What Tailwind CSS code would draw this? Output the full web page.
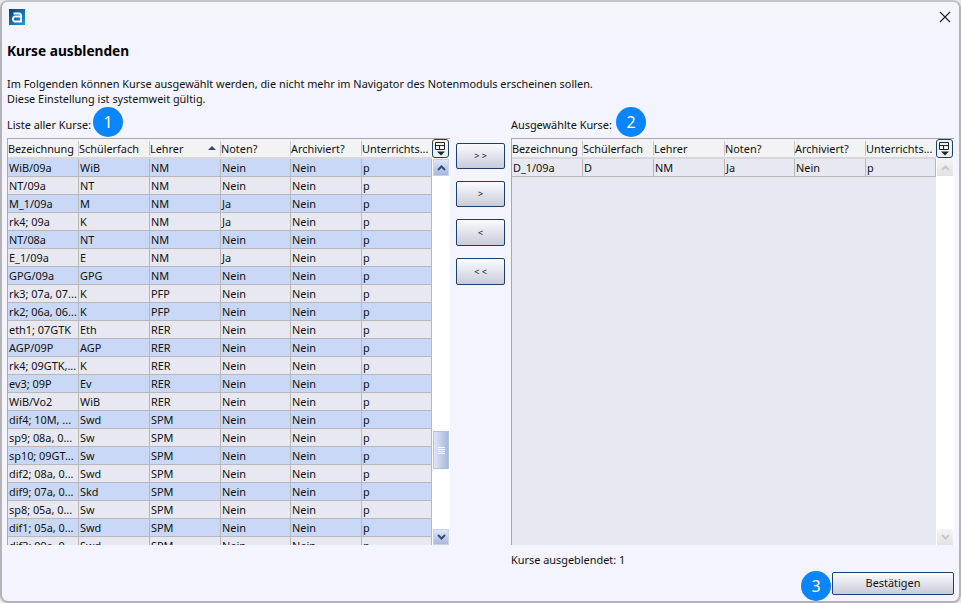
<!DOCTYPE html>
<html lang="de">
<head>
<meta charset="UTF-8">
<title>Kurse ausblenden</title>
<script src="https://cdn.jsdelivr.net/npm/@tailwindcss/browser@4"></script>
</head>
<body class="w-[961px] h-[603px] overflow-hidden bg-[#e8e8e8] font-['Noto_Sans',sans-serif] text-[10.9px] text-[#111]">
<div class="relative w-[961px] h-[603px] flex flex-col rounded-[8px] border-2 border-b-2 border-[#b4b4b8] border-t-[#c4c4c8] bg-[#f3f4ff] overflow-hidden">

  <!-- title bar -->
  <div class="h-[29px] shrink-0 flex items-center justify-between pl-[7px] pr-[8px] bg-[#f4f5fb]">
    <svg width="16" height="16" viewBox="0 0 16 16">
      <defs><linearGradient id="lg" x1="0" y1="0" x2="1" y2="1"><stop offset="0" stop-color="#0b3f78"/><stop offset="1" stop-color="#1f9be0"/></linearGradient></defs>
      <rect width="16" height="16" fill="url(#lg)"/>
      <path d="M4.500 4.500h5.500a2 2 0 0 1 2 2v6H6a2 2 0 0 1-2-2V9.500a2 2 0 0 1 2-2h6" fill="none" stroke="#fff" stroke-width="1.800"/>
    </svg>
    <svg width="12" height="12" viewBox="0 0 12 12"><path d="M1 1l10 10M11 1L1 11" stroke="#222" stroke-width="1.100"/></svg>
  </div>

  <div class="flex-1 flex flex-col px-[5px]">
    <h1 class="mt-[10px] text-[13.7px] leading-[19px] font-bold text-black">Kurse ausblenden</h1>
    <p class="mt-[16px] leading-[15px]">Im Folgenden können Kurse ausgewählt werden, die nicht mehr im Navigator des Notenmoduls erscheinen sollen.<br>Diese Einstellung ist systemweit gültig.</p>

    <div class="mt-[11px] flex items-start">
      <!-- left list -->
      <div class="w-[443px] shrink-0">
        <div class="h-[15px] leading-[15px]">Liste aller Kurse:</div>
        <div class="mt-[6px] h-[407px] border-t border-l border-[#a9a9ad] flex overflow-hidden">
          <div class="w-[424px] shrink-0 flex flex-col">
            <div class="h-[20px] shrink-0 grid grid-cols-[71px_71px_71px_70px_71px_70px] items-center bg-[#f3f3f6] border-b-2 border-[#d8d8dc]">
              <div class="h-[15px] leading-[15px] border-r border-[#c8c8cc] whitespace-nowrap overflow-hidden">Bezeichnung</div>
              <div class="h-[15px] leading-[15px] border-r border-[#c8c8cc] whitespace-nowrap overflow-hidden">Schülerfach</div>
              <div class="h-[15px] leading-[15px] pr-[4px] border-r border-[#c8c8cc] flex items-center justify-between">Lehrer<span class="w-0 h-0 border-x-[4px] border-x-transparent border-b-[4px] border-b-[#334a5e]"></span></div>
              <div class="h-[15px] leading-[15px] border-r border-[#c8c8cc]">Noten?</div>
              <div class="h-[15px] leading-[15px] border-r border-[#c8c8cc]">Archiviert?</div>
              <div class="h-[15px] leading-[15px] whitespace-nowrap overflow-hidden">Unterrichts...</div>
            </div>
            <div id="rows" class="flex-1 overflow-hidden"></div>
          </div>
          <div class="w-[18px] shrink-0 relative flex flex-col bg-white pr-[1px]">
            <div class="h-[19px] w-[17px] shrink-0 flex items-center justify-center rounded-[3px] border border-[#1f3f6e] bg-[#f0f2fa]">
              <svg width="11" height="14" viewBox="0 0 11 14"><path d="M.5.500h9v7h-9zM.5 3.500h9M4.500 3.500v4" fill="none" stroke="#222"/><path d="M2 9.500h8l-4 4z" fill="#222"/></svg>
            </div>
            <div class="mt-[1px] h-[17px] ml-[1px] flex items-center justify-center border border-[#c8d2ee] bg-gradient-to-b from-[#dfe6f8] to-[#a9b7dc]">
              <svg width="9" height="6" viewBox="0 0 9 6"><path d="M1 5l3.500-3.500L8 5" fill="none" stroke="#35506e" stroke-width="2"/></svg>
            </div>
            <div class="relative flex-1">
              <div class="absolute top-[255px] left-[1px] w-[16px] h-[38px] border border-[#b4c0e4] bg-gradient-to-r from-[#dfe6f8] to-[#a9b7dc] flex flex-col items-center justify-center gap-[1px]">
                <span class="block w-[7px] h-px bg-white"></span><span class="block w-[7px] h-px bg-white"></span><span class="block w-[7px] h-px bg-white"></span><span class="block w-[7px] h-px bg-white"></span>
              </div>
            </div>
            <div class="h-[16px] ml-[1px] flex items-center justify-center border border-[#c8d2ee] bg-gradient-to-b from-[#dfe6f8] to-[#a9b7dc]">
              <svg width="9" height="6" viewBox="0 0 9 6"><path d="M1 1l3.500 3.500L8 1" fill="none" stroke="#35506e" stroke-width="2"/></svg>
            </div>
          </div>
        </div>
      </div>

      <!-- move buttons -->
      <div class="w-[61px] shrink-0 pt-[26px] pl-[6px] flex flex-col">
        <button class="w-[49px] h-[26px] rounded-[2px] border border-[#1f3f6e] bg-gradient-to-b from-[#fbfbff] to-[#c9cbda] text-[9px]">&gt; &gt;</button>
        <button class="mt-[12px] w-[49px] h-[26px] rounded-[2px] border border-[#1f3f6e] bg-gradient-to-b from-[#fbfbff] to-[#c9cbda] text-[9px]">&gt;</button>
        <button class="mt-[12px] w-[49px] h-[27px] rounded-[2px] border border-[#1f3f6e] bg-gradient-to-b from-[#fbfbff] to-[#c9cbda] text-[9px]">&lt;</button>
        <button class="mt-[12px] w-[49px] h-[27px] rounded-[2px] border border-[#1f3f6e] bg-gradient-to-b from-[#fbfbff] to-[#c9cbda] text-[9px]">&lt; &lt;</button>
      </div>

      <!-- right list -->
      <div class="w-[443px] shrink-0">
        <div class="h-[15px] leading-[15px]">Ausgewählte Kurse:</div>
        <div class="mt-[6px] h-[407px] border-t border-l border-[#a9a9ad] flex overflow-hidden">
          <div class="w-[424px] shrink-0 flex flex-col bg-[#e8e8f2]">
            <div class="h-[20px] shrink-0 grid grid-cols-[71px_71px_71px_70px_71px_70px] items-center bg-[#f3f3f6] border-b-2 border-[#d8d8dc]">
              <div class="h-[15px] leading-[15px] border-r border-[#c8c8cc] whitespace-nowrap overflow-hidden">Bezeichnung</div>
              <div class="h-[15px] leading-[15px] border-r border-[#c8c8cc] whitespace-nowrap overflow-hidden">Schülerfach</div>
              <div class="h-[15px] leading-[15px] border-r border-[#c8c8cc]">Lehrer</div>
              <div class="h-[15px] leading-[15px] border-r border-[#c8c8cc]">Noten?</div>
              <div class="h-[15px] leading-[15px] border-r border-[#c8c8cc]">Archiviert?</div>
              <div class="h-[15px] leading-[15px] whitespace-nowrap overflow-hidden">Unterrichts...</div>
            </div>
            <div class="h-[18px] grid grid-cols-[71px_71px_71px_70px_71px_70px] border-b border-[#b8b8bc] leading-[17px]">
              <div class="pl-[1px] border-r border-[#b8b8bc]">D_1/09a</div><div class="pl-[1px] border-r border-[#b8b8bc]">D</div><div class="pl-[1px] border-r border-[#b8b8bc]">NM</div><div class="pl-[1px] border-r border-[#b8b8bc]">Ja</div><div class="pl-[1px] border-r border-[#b8b8bc]">Nein</div><div class="pl-[1px] border-r border-[#b8b8bc]">p</div>
            </div>
          </div>
          <div class="w-[18px] shrink-0 flex flex-col bg-white pr-[1px]">
            <div class="h-[19px] w-[17px] shrink-0 flex items-center justify-center rounded-[3px] border border-[#1f3f6e] bg-[#f0f2fa]">
              <svg width="11" height="14" viewBox="0 0 11 14"><path d="M.5.500h9v7h-9zM.5 3.500h9M4.500 3.500v4" fill="none" stroke="#222"/><path d="M2 9.500h8l-4 4z" fill="#222"/></svg>
            </div>
            <div class="mt-[1px] h-[17px] ml-[1px] flex items-center justify-center bg-gradient-to-b from-[#f4f4f6] to-[#e2e2e6]">
              <svg width="9" height="6" viewBox="0 0 9 6"><path d="M1 5l3.500-3.500L8 5" fill="none" stroke="#c8c8cc" stroke-width="2"/></svg>
            </div>
            <div class="flex-1"></div>
            <div class="h-[16px] ml-[1px] flex items-center justify-center bg-gradient-to-b from-[#f4f4f6] to-[#e2e2e6]">
              <svg width="9" height="6" viewBox="0 0 9 6"><path d="M1 1l3.500 3.500L8 1" fill="none" stroke="#c8c8cc" stroke-width="2"/></svg>
            </div>
          </div>
        </div>
      </div>
    </div>

    <div class="mt-[7px] pl-[504px] h-[15px] leading-[15px]">Kurse ausgeblendet: 1</div>
    <div class="mt-[5px] flex justify-end">
      <button class="w-[122px] h-[23px] rounded-[2px] border border-[#1f3f6e] bg-gradient-to-b from-[#fbfbff] to-[#c9cbda]">Bestätigen</button>
    </div>
  </div>

  <!-- callouts -->
  <div class="absolute left-[91px] top-[105px] w-[30px] h-[30px] rounded-full bg-[#0a84ff] text-white text-[16px] flex items-center justify-center">1</div>
  <div class="absolute left-[614px] top-[105px] w-[30px] h-[30px] rounded-full bg-[#0a84ff] text-white text-[16px] flex items-center justify-center">2</div>
  <div class="absolute left-[799px] top-[569px] w-[30px] h-[30px] rounded-full bg-[#0a84ff] text-white text-[16px] flex items-center justify-center">3</div>
</div>

<script>
  const data = [
    ['WiB/09a','WiB','NM','Nein'],['NT/09a','NT','NM','Nein'],['M_1/09a','M','NM','Ja'],['rk4; 09a','K','NM','Ja'],
    ['NT/08a','NT','NM','Nein'],['E_1/09a','E','NM','Ja'],['GPG/09a','GPG','NM','Nein'],['rk3; 07a, 07...','K','PFP','Nein'],
    ['rk2; 06a, 06...','K','PFP','Nein'],['eth1; 07GTK','Eth','RER','Nein'],['AGP/09P','AGP','RER','Nein'],['rk4; 09GTK,...','K','RER','Nein'],
    ['ev3; 09P','Ev','RER','Nein'],['WiB/Vo2','WiB','RER','Nein'],['dif4; 10M, ...','Swd','SPM','Nein'],['sp9; 08a, 0...','Sw','SPM','Nein'],
    ['sp10; 09GT...','Sw','SPM','Nein'],['dif2; 08a, 0...','Swd','SPM','Nein'],['dif9; 07a, 0...','Skd','SPM','Nein'],['sp8; 05a, 0...','Sw','SPM','Nein'],
    ['dif1; 05a, 0...','Swd','SPM','Nein'],['dif3; 09a, 0...','Swd','SPM','Nein']
  ];
  const cell = t => '<div class="pl-[1px] border-r border-[#b8b8bc] whitespace-nowrap overflow-hidden">' + t + '</div>';
  document.getElementById('rows').innerHTML = data.map((r, i) =>
    '<div class="h-[18px] grid grid-cols-[71px_71px_71px_70px_71px_70px] border-b border-[#b8b8bc] leading-[17px] ' + (i % 2 ? 'bg-[#e8e8f2]' : 'bg-[#c9d8f6]') + '">' +
    cell(r[0]) + cell(r[1]) + cell(r[2]) + cell(r[3]) + cell('Nein') + cell('p') + '</div>'
  ).join('');
</script>
</body>
</html>
